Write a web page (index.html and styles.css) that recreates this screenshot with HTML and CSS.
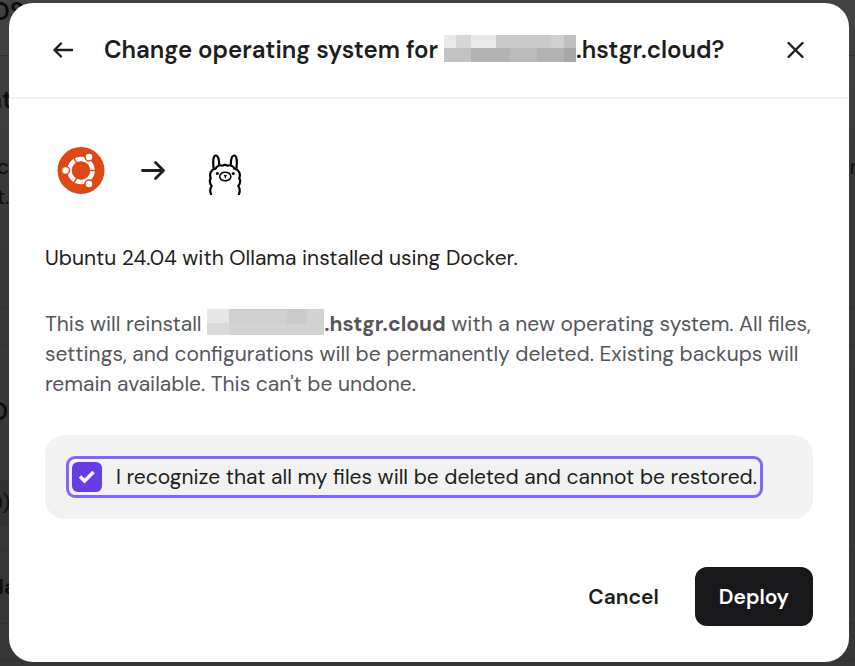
FILE: index.html
```html
<!DOCTYPE html>
<html lang="en">
<head>
    <meta charset="UTF-8">
    <meta name="viewport" content="width=device-width, initial-scale=1.0">
    <title>Change operating system</title>
    <link rel="stylesheet" href="styles.css">
</head>
<body>
    <!-- page under the dialog -->
    <div class="page" aria-hidden="true">
        <div class="row row-top"><span class="page-title">OS</span></div>
        <div class="row row-intro">
            <span class="page-heading">nt</span>
            <div class="page-copy"><span>c<br>t.</span><span>re</span></div>
        </div>
        <div class="row row-gap"></div>
        <div class="row row-form">
            <span class="page-title">O</span>
            <span class="page-field">0)</span>
        </div>
        <div class="row row-item"><span class="page-item">lla</span></div>
        <div class="row row-last"></div>
    </div>

    <div class="modal" role="dialog" aria-modal="true" aria-labelledby="title">
        <header class="modal-header">
            <button class="icon-button" aria-label="Back">
                <svg width="24" height="24" viewBox="0 0 24 24"><path d="M21 12H3.500M10 5.500L3.500 12l6.500 6.500"/></svg>
            </button>
            <h1 class="title" id="title">Change operating system for
                <svg class="mask" width="132" height="27" viewBox="0 0 132 27" shape-rendering="crispEdges">
                    <rect width="132" height="13" fill="#cacaca"/>
                    <rect width="12" height="13" fill="#e9e9e9"/>
                    <rect x="12" width="15" height="13" fill="#d7d7d7"/>
                    <rect x="27" width="25" height="13" fill="#e9e9e9"/>
                    <rect x="107" width="13" height="13" fill="#d0d0d0"/>
                    <rect x="120" width="12" height="13" fill="#c0c0c0"/>
                    <rect y="13" width="132" height="14" fill="#b2b2b2"/>
                    <rect y="13" width="27" height="14" fill="#c2c2c2"/>
                    <rect x="66" y="13" width="27" height="14" fill="#bababa"/>
                    <rect x="120" y="13" width="12" height="14" fill="#a8a8a8"/>
                </svg>.hstgr.cloud?</h1>
            <button class="icon-button" aria-label="Close">
                <svg width="24" height="24" viewBox="0 0 24 24"><path d="M5.500 5l14 14M19.500 5l-14 14"/></svg>
            </button>
        </header>

        <div class="modal-body">
            <div class="systems">
                <svg width="48" height="48" viewBox="0 0 48 48" role="img" aria-label="Ubuntu">
                    <circle cx="24" cy="23.500" r="23.500" fill="#dd4814"/>
                    <circle cx="24" cy="23.500" r="11.500" fill="none" stroke="#fff" stroke-width="4.500"/>
                    <path d="M24 23.500h16M24 23.500L16 9.500M24 23.500l-8 14" stroke="#dd4814" stroke-width="1.500"/>
                    <circle cx="24" cy="23.500" r="9" fill="#dd4814"/>
                    <g fill="#fff" stroke="#dd4814" stroke-width="1.500">
                        <circle cx="8.500" cy="23.500" r="4"/>
                        <circle cx="32" cy="10" r="4"/>
                        <circle cx="32" cy="37" r="4"/>
                    </g>
                </svg>
                <svg class="arrow" width="28" height="28" viewBox="0 0 28 28"><path d="M3.500 13.500h21M16.500 5.500l8 8-8 8"/></svg>
                <svg width="48" height="48" viewBox="0 0 48 48" role="img" aria-label="Ollama">
                    <g fill="none" stroke="#000" stroke-width="2.200" stroke-linecap="round" stroke-linejoin="round">
                        <path d="M10 47c-1.200-3-1-5.500.7-8-2-2.300-2.300-5.200-1-8-1.600-4.500.6-8.700 4.800-9.300 1.200-2.700 4.300-4.200 7-3 1.300-.8 3.700-.8 5 0 2.700-1.200 5.800.3 7 3 4.200.6 6.400 4.800 4.800 9.300 1.300 2.800 1 5.700-1 8 1.700 2.500 1.900 5 .7 8"/>
                        <path d="M12.500 20.500c-.7-5-.5-12 2.300-12 2.500 0 3.400 4.500 3.300 8.500M35.500 20.500c.7-5 .5-12-2.300-12-2.500 0-3.400 4.500-3.300 8.500"/>
                        <ellipse cx="24.300" cy="29.500" rx="5.600" ry="4.300" stroke-width="1.500"/>
                        <path d="M23.500 28.500l.8.700.8-.7M24.300 29.200v1.600" stroke-width="1.200"/>
                    </g>
                    <circle cx="16.300" cy="26.500" r="1.500"/>
                    <circle cx="32.300" cy="26.500" r="1.500"/>
                </svg>
            </div>

            <p class="summary">Ubuntu 24.04 with Ollama installed using Docker.</p>

            <p class="warning">This will reinstall
                <svg class="mask" width="117" height="26" viewBox="0 0 117 26" shape-rendering="crispEdges">
                    <rect width="117" height="26" fill="#d3d3d4"/>
                    <rect width="22" height="14" fill="#e7e7e7"/>
                    <rect x="22" width="57" height="14" fill="#cfcfd0"/>
                    <rect x="79" width="21" height="15" fill="#cbcbcd"/>
                    <rect y="14" width="22" height="12" fill="#d9d9d9"/>
                </svg><strong>.hstgr.cloud</strong> with a new operating system. All files, settings, and configurations will be permanently deleted. Existing backups will remain available. This can't be undone.</p>

            <div class="confirm">
                <label class="check">
                    <input type="checkbox" checked>
                    <svg class="tick" width="18" height="18" viewBox="0 0 18 18"><path d="M2 8.500l4.500 4.500 9-9"/></svg>
                    <span>I recognize that all my files will be deleted and cannot be restored.</span>
                </label>
            </div>

            <div class="actions">
                <button class="button">Cancel</button>
                <button class="button button-primary">Deploy</button>
            </div>
        </div>
    </div>
</body>
</html>
```
FILE: styles.css
```css
* {
    box-sizing: border-box;
}
body {
    margin: 0;
    min-height: 100vh;
    padding: 3px 6px 4px 9px;
    background: linear-gradient(#424242, #383838 30%, #363636);
    font-family: "DM Sans", Inter, "Liberation Sans", sans-serif;
    font-size: 21px;
    color: #1d1e20;
}

/* page under the dialog */
.page {
    position: absolute;
    inset: 0;
    overflow: hidden;
    color: #0c0c0d;
}
.row {
    border-bottom: 1px solid #303030;
}
.row-top {
    height: 56px;
}
.row-intro {
    height: 253px;
    padding-top: 28px;
}
.row-gap {
    height: 37px;
}
.row-form {
    height: 205px;
    padding-top: 50px;
}
.row-item {
    height: 73px;
    padding-top: 24px;
}
.row-last {
    height: 37px;
}
.page-title,
.page-heading,
.page-field,
.page-item {
    display: flex;
    justify-content: flex-end;
    width: 12px;
    font-weight: 600;
    line-height: 32px;
}
.page-title,
.page-heading {
    font-size: 24px;
}
.page-title {
    width: 8px;
}
.row-top .page-title {
    width: 24px;
    line-height: 24px;
}
.page-item {
    width: 16px;
    line-height: 24px;
}
.page-field {
    width: 10px;
    height: 46px;
    margin-top: 52px;
    background: #323232;
    font-weight: 400;
    line-height: 46px;
}
.page-copy {
    display: flex;
    justify-content: space-between;
    margin: 36px -14px 0 -3px;
    line-height: 30px;
}

.modal {
    position: relative;
    background: #ffffff;
    border-radius: 24px;
}
.modal-header {
    display: flex;
    align-items: center;
    gap: 23px;
    height: 96px;
    padding: 0 36px;
    border-bottom: 2px solid #f2f2f2;
}
.title {
    flex: 1;
    margin: 0;
    font-size: 24px;
    font-weight: 600;
    line-height: 32px;
}
.mask {
    margin-top: -4px;
    vertical-align: -4px;
}
.icon-button {
    display: flex;
    align-items: center;
    justify-content: center;
    width: 36px;
    height: 36px;
    padding: 0;
    border: none;
    background: none;
    cursor: pointer;
}
.icon-button path,
.arrow path {
    fill: none;
    stroke: #1d1e20;
    stroke-width: 2.4;
    stroke-linecap: round;
    stroke-linejoin: round;
}
.arrow path {
    stroke-width: 2.8;
}

.modal-body {
    padding: 48px 36px 36px;
}
.systems {
    display: flex;
    align-items: center;
    gap: 34px;
    padding: 0 12px;
}
.summary {
    margin: 48px 0 36px;
    line-height: 30px;
}
.warning {
    margin: 0;
    line-height: 30px;
    color: #56565c;
}
.confirm {
    display: flex;
    margin: 36px 0 48px;
    padding: 21px;
    background: #f2f2f2;
    border-radius: 20px;
}
.check {
    display: grid;
    grid-template-columns: 30px auto;
    align-items: center;
    column-gap: 14px;
    padding: 3px;
    border: 3px solid #8264ff;
    border-radius: 9px;
    line-height: 30px;
    cursor: pointer;
}
.check input {
    appearance: none;
    grid-area: 1 / 1;
    width: 30px;
    height: 30px;
    margin: 0;
    background: #673de6;
    border-radius: 6px;
    outline: none;
}
.tick {
    grid-area: 1 / 1;
    justify-self: center;
    z-index: 1;
}
.tick path {
    fill: none;
    stroke: #ffffff;
    stroke-width: 3.4;
}
.actions {
    display: flex;
    justify-content: flex-end;
    gap: 12px;
}
.button {
    height: 59px;
    padding: 0 24px;
    border: none;
    border-radius: 12px;
    background: none;
    font-family: inherit;
    font-size: 21px;
    font-weight: 600;
    color: #1d1e20;
    cursor: pointer;
}
.button-primary {
    background: #18181a;
    color: #ffffff;
}
```
